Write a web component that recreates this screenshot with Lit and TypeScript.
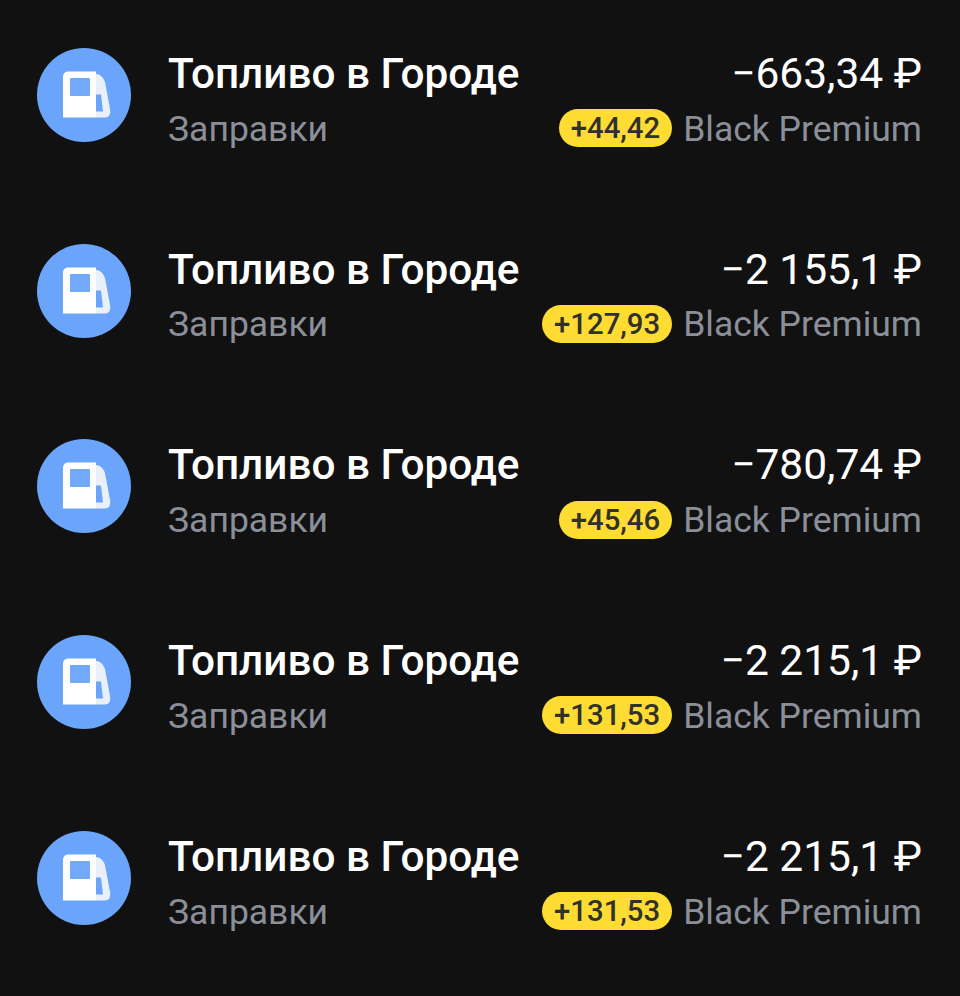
import {LitElement, css, html} from 'lit'
import {customElement} from 'lit/decorators.js'

const rows = [
  {amount: '−663,34 ₽', bonus: '+44,42'},
  {amount: '−2 155,1 ₽', bonus: '+127,93'},
  {amount: '−780,74 ₽', bonus: '+45,46'},
  {amount: '−2 215,1 ₽', bonus: '+131,53'},
  {amount: '−2 215,1 ₽', bonus: '+131,53'},
]

@customElement('app-root')
export class AppRoot extends LitElement {
  static styles = css`
    :host {
      display: block;
      height: 996px;
      overflow: hidden;
      background: #111112;
      font-family: Roboto, "Noto Sans", sans-serif;
      padding-top: 48px;
      box-sizing: border-box;
    }

    .row {
      display: flex;
      align-items: flex-start;
      height: 195.7px;
      padding: 0 38px 0 37px;
      box-sizing: border-box;
    }

    .icon {
      width: 94px;
      height: 94px;
      flex: none;
      margin-right: 37px;
    }

    .left {
      flex: 1;
    }

    .right {
      display: flex;
      flex-direction: column;
      align-items: flex-end;
    }

    .top {
      height: 52px;
      line-height: 52px;
      font-size: 42.5px;
      color: #fff;
      white-space: nowrap;
    }

    .title {
      font-size: 42.3px;
      font-weight: 500;
    }

    .bottom {
      display: flex;
      align-items: center;
      height: 57.5px;
      font-size: 35.5px;
      color: #8a8f98;
      white-space: nowrap;
    }

    .bonus {
      background: #fedc32;
      color: #30302c;
      font-size: 29.3px;
      font-weight: 500;
      line-height: 38px;
      padding: 0 12px;
      border-radius: 19px;
      margin: -1px 11px 0 0;
    }
  `

  icon() {
    return html`<svg class="icon" viewBox="0 0 94 94">
      <circle cx="47" cy="47" r="47" fill="#6ba5fb"></circle>
      <path fill="#eaf0f9" d="M59 26c4 0 7 3 9 8l5 27c1 5-1 8.500-5 8.500H59z"></path>
      <path fill="#fff" d="M31 23.500H59V69.500H26V28.500a5 5 0 0 1 5-5z"></path>
      <rect x="33" y="30" width="20" height="18" rx="1" fill="#71a9fb"></rect>
      <path fill="#6ba5fb" d="M59 46.500h5l2 17h-7z"></path>
    </svg>`
  }

  render() {
    return html`${rows.map(
      (r) => html`<div class="row">
        ${this.icon()}
        <div class="left">
          <div class="top title">Топливо в Городе</div>
          <div class="bottom">Заправки</div>
        </div>
        <div class="right">
          <div class="top">${r.amount}</div>
          <div class="bottom"><span class="bonus">${r.bonus}</span>Black Premium</div>
        </div>
      </div>`,
    )}`
  }
}
